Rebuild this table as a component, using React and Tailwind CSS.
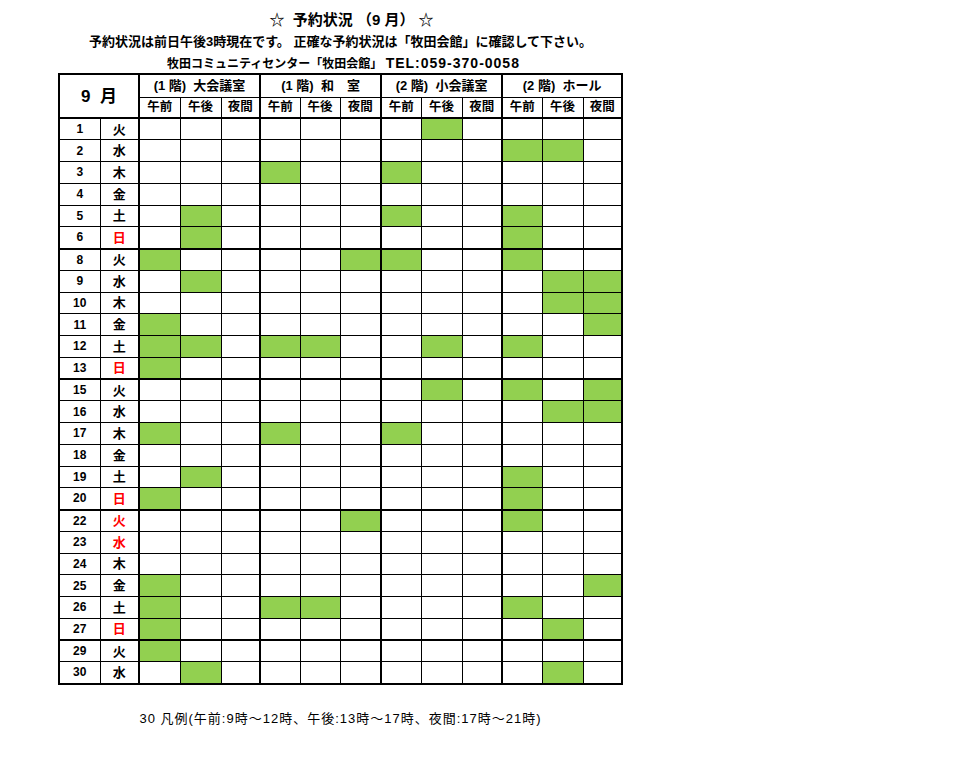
const rows = [
  { d: 1, w: "火", b: "000000010000" },
  { d: 2, w: "水", b: "000000000110" },
  { d: 3, w: "木", b: "000100100000" },
  { d: 4, w: "金", b: "000000000000" },
  { d: 5, w: "土", b: "010000100100" },
  { d: 6, w: "日", b: "010000000100", red: true, end: true },
  { d: 8, w: "火", b: "100001100100" },
  { d: 9, w: "水", b: "010000000011" },
  { d: 10, w: "木", b: "000000000011" },
  { d: 11, w: "金", b: "100000000001" },
  { d: 12, w: "土", b: "110110010100" },
  { d: 13, w: "日", b: "100000000000", red: true, end: true },
  { d: 15, w: "火", b: "000000010101" },
  { d: 16, w: "水", b: "000000000011" },
  { d: 17, w: "木", b: "100100100000" },
  { d: 18, w: "金", b: "000000000000" },
  { d: 19, w: "土", b: "010000000100" },
  { d: 20, w: "日", b: "100000000100", red: true, end: true },
  { d: 22, w: "火", b: "000001000100", red: true },
  { d: 23, w: "水", b: "000000000000", red: true },
  { d: 24, w: "木", b: "000000000000" },
  { d: 25, w: "金", b: "100000000001" },
  { d: 26, w: "土", b: "100110000100" },
  { d: 27, w: "日", b: "100000000010", red: true, end: true },
  { d: 29, w: "火", b: "100000000000" },
  { d: 30, w: "水", b: "010000000010" },
];

const rooms = ["(1 階)  大会議室", "(1 階)  和　室", "(2 階)  小会議室", "(2 階)  ホール"];
const slots = ["午前", "午後", "夜間"];
const widths = [41, 41, 39, 40, 40, 41, 40, 41, 40, 40, 41, 39];

export default function App() {
  return (
    <div className="min-h-[761px] w-[960px] bg-white text-black font-['Liberation_Sans','Noto_Sans_CJK_JP',sans-serif]">
      <div className="w-[565px] ml-[58px] pt-[12px]">
        {/* title block */}
        <div className="text-center font-bold leading-none">
          <p className="text-[15px] h-[20px] pl-[22px] whitespace-pre">☆  予約状況 （9 月） ☆</p>
          <p className="text-[13px] h-[22px] pt-[3px]">
            予約状況は前日午後3時現在です。 正確な予約状況は「牧田会館」に確認して下さい。
          </p>
          <p className="text-[12px] h-[19px] pt-[2px] pl-[6px] whitespace-pre">
            牧田コミュニティセンター「牧田会館」 <span className="text-[14px] tracking-[1px]">TEL:059-370-0058</span>
          </p>
        </div>

        {/* schedule table */}
        <table className="w-[565px] table-fixed border-collapse border-2 border-black font-bold leading-none">
          <colgroup>
            <col className="w-[41px]" />
            <col className="w-[39px]" />
            {widths.map((w, i) => (
              <col key={i} style={{ width: w }} />
            ))}
          </colgroup>
          <thead>
            <tr className="h-[23px]">
              <th colSpan={2} rowSpan={2} className="border-2 border-black text-[17px] text-center whitespace-pre">
                {"9  月"}
              </th>
              {rooms.map((r) => (
                <th key={r} colSpan={3} className="border-2 border-b border-black text-[13px] font-bold whitespace-pre text-center">
                  {r}
                </th>
              ))}
            </tr>
            <tr className="h-[21px]">
              {rooms.map((r, gi) =>
                slots.map((s, si) => (
                  <th
                    key={r + s}
                    className={`border border-b-2 border-black text-[12.5px] text-center ${si === 0 ? "border-l-2" : ""} ${si === 2 && gi === 3 ? "border-r-2" : ""}`}
                  >
                    {s}
                  </th>
                ))
              )}
            </tr>
          </thead>
          <tbody>
            {rows.map((r) => (
              <tr key={r.d} className="h-[21.75px]">
                <td className={`border border-black text-[12px] text-center ${r.end ? "border-b-2" : ""}`}>{r.d}</td>
                <td className={`border border-r-2 border-black text-[13px] text-center ${r.red ? "text-[#ff0000]" : ""} ${r.end ? "border-b-2" : ""}`}>
                  {r.w}
                </td>
                {r.b.split("").map((v, i) => (
                  <td
                    key={i}
                    className={`border border-black ${i % 3 === 0 ? "border-l-2" : ""} ${r.end ? "border-b-2" : ""} ${v === "1" ? "bg-[#92d050]" : "bg-white"}`}
                  />
                ))}
              </tr>
            ))}
          </tbody>
        </table>

        {/* legend */}
        <p className="mt-[27px] text-center text-[13px] tracking-[1px] leading-none">
          30 凡例(午前:9時～12時、午後:13時～17時、夜間:17時～21時)
        </p>
      </div>
    </div>
  );
}
